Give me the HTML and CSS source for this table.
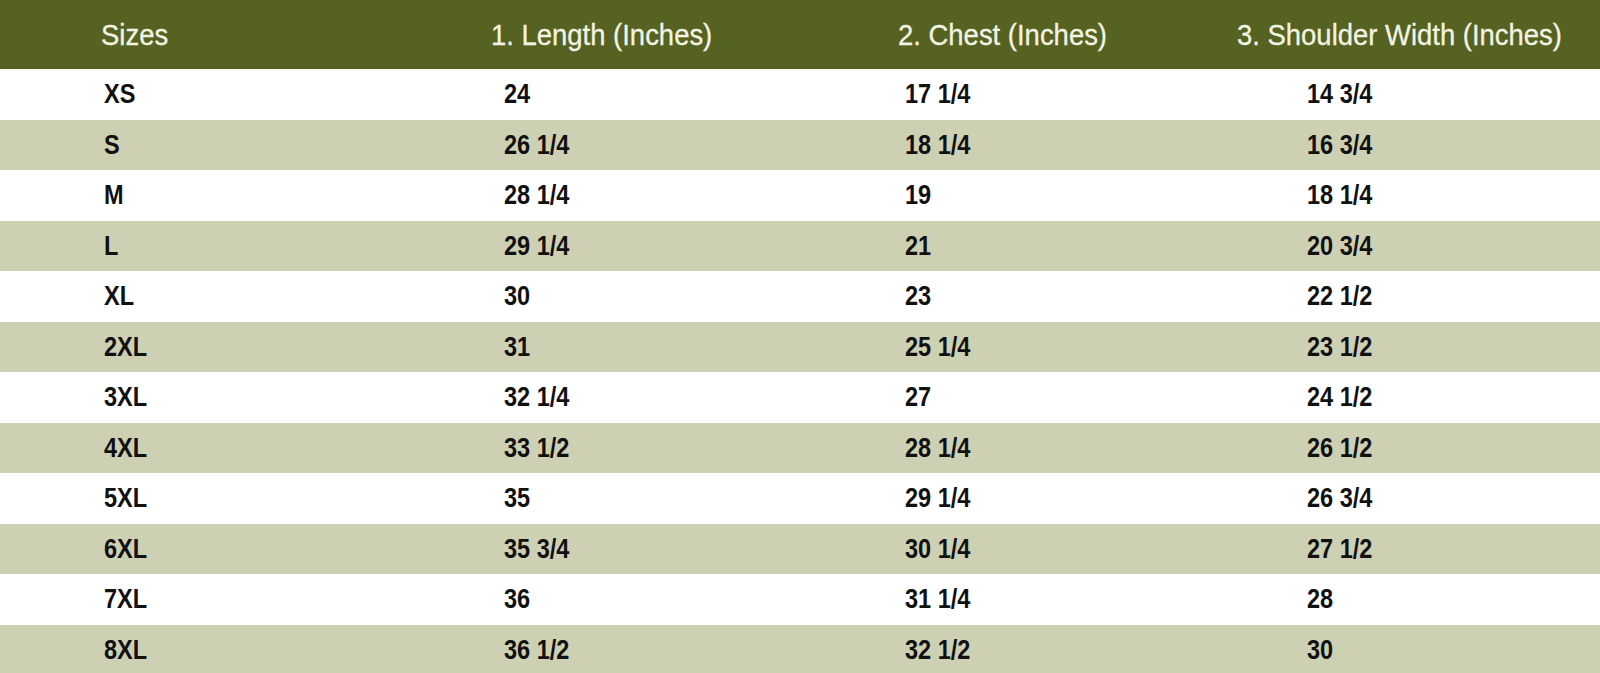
FILE: index.html
```html
<!DOCTYPE html>
<html>
<head>
<meta charset="utf-8">
<link rel="stylesheet" href="styles.css">
</head>
<body>
<div class="chart">
  <div class="head">
    <div class="hc hc1"><span>Sizes</span></div>
    <div class="hc hc2"><span>1. Length (Inches)</span></div>
    <div class="hc hc3"><span>2. Chest (Inches)</span></div>
    <div class="hc hc4"><span>3. Shoulder Width (Inches)</span></div>
  </div>
  <div class="row"><div class="c c1"><span>XS</span></div><div class="c c2"><span>24</span></div><div class="c c3"><span>17 1/4</span></div><div class="c c4"><span>14 3/4</span></div></div>
  <div class="row alt"><div class="c c1"><span>S</span></div><div class="c c2"><span>26 1/4</span></div><div class="c c3"><span>18 1/4</span></div><div class="c c4"><span>16 3/4</span></div></div>
  <div class="row"><div class="c c1"><span>M</span></div><div class="c c2"><span>28 1/4</span></div><div class="c c3"><span>19</span></div><div class="c c4"><span>18 1/4</span></div></div>
  <div class="row alt"><div class="c c1"><span>L</span></div><div class="c c2"><span>29 1/4</span></div><div class="c c3"><span>21</span></div><div class="c c4"><span>20 3/4</span></div></div>
  <div class="row"><div class="c c1"><span>XL</span></div><div class="c c2"><span>30</span></div><div class="c c3"><span>23</span></div><div class="c c4"><span>22 1/2</span></div></div>
  <div class="row alt"><div class="c c1"><span>2XL</span></div><div class="c c2"><span>31</span></div><div class="c c3"><span>25 1/4</span></div><div class="c c4"><span>23 1/2</span></div></div>
  <div class="row"><div class="c c1"><span>3XL</span></div><div class="c c2"><span>32 1/4</span></div><div class="c c3"><span>27</span></div><div class="c c4"><span>24 1/2</span></div></div>
  <div class="row alt"><div class="c c1"><span>4XL</span></div><div class="c c2"><span>33 1/2</span></div><div class="c c3"><span>28 1/4</span></div><div class="c c4"><span>26 1/2</span></div></div>
  <div class="row"><div class="c c1"><span>5XL</span></div><div class="c c2"><span>35</span></div><div class="c c3"><span>29 1/4</span></div><div class="c c4"><span>26 3/4</span></div></div>
  <div class="row alt"><div class="c c1"><span>6XL</span></div><div class="c c2"><span>35 3/4</span></div><div class="c c3"><span>30 1/4</span></div><div class="c c4"><span>27 1/2</span></div></div>
  <div class="row"><div class="c c1"><span>7XL</span></div><div class="c c2"><span>36</span></div><div class="c c3"><span>31 1/4</span></div><div class="c c4"><span>28</span></div></div>
  <div class="row alt"><div class="c c1"><span>8XL</span></div><div class="c c2"><span>36 1/2</span></div><div class="c c3"><span>32 1/2</span></div><div class="c c4"><span>30</span></div></div>
</div>
</body>
</html>
```

FILE: styles.css
```css
html, body {
  margin: 0;
  padding: 0;
  background: #ffffff;
  overflow: hidden;
}
body {
  width: 1600px;
  height: 673px;
  font-family: "Liberation Sans", Arial, sans-serif;
}
.chart {
  display: flex;
  flex-direction: column;
  width: 1600px;
}
.head {
  display: grid;
  grid-template-columns: repeat(4, 400px);
  height: 69px;
  align-items: center;
  background: #556221;
}
.hc {
  color: #f3f3e3;
  font-size: 30px;
  line-height: 1;
  white-space: nowrap;
}
.hc span {
  display: inline-block;
  transform: scaleX(0.915);
  transform-origin: left center;
  -webkit-text-stroke: 0.3px #f3f3e3;
}
.hc1 { padding-left: 101px; }
.hc2 { padding-left: 91px; }
.hc3 { padding-left: 98px; }
.hc4 { padding-left: 37px; }
.row {
  display: grid;
  grid-template-columns: repeat(4, 400px);
  height: 50.5px;
  align-items: center;
  background: #ffffff;
}
.row.alt {
  background: #ced0b4;
}
.c {
  font-size: 28px;
  font-weight: bold;
  color: #111111;
  line-height: 1;
  white-space: nowrap;
}
.c span {
  display: inline-block;
  transform: scaleX(0.84);
  transform-origin: left center;
}
.c1 { padding-left: 104px; }
.c2 { padding-left: 104px; }
.c3 { padding-left: 105px; }
.c4 { padding-left: 107px; }
```
